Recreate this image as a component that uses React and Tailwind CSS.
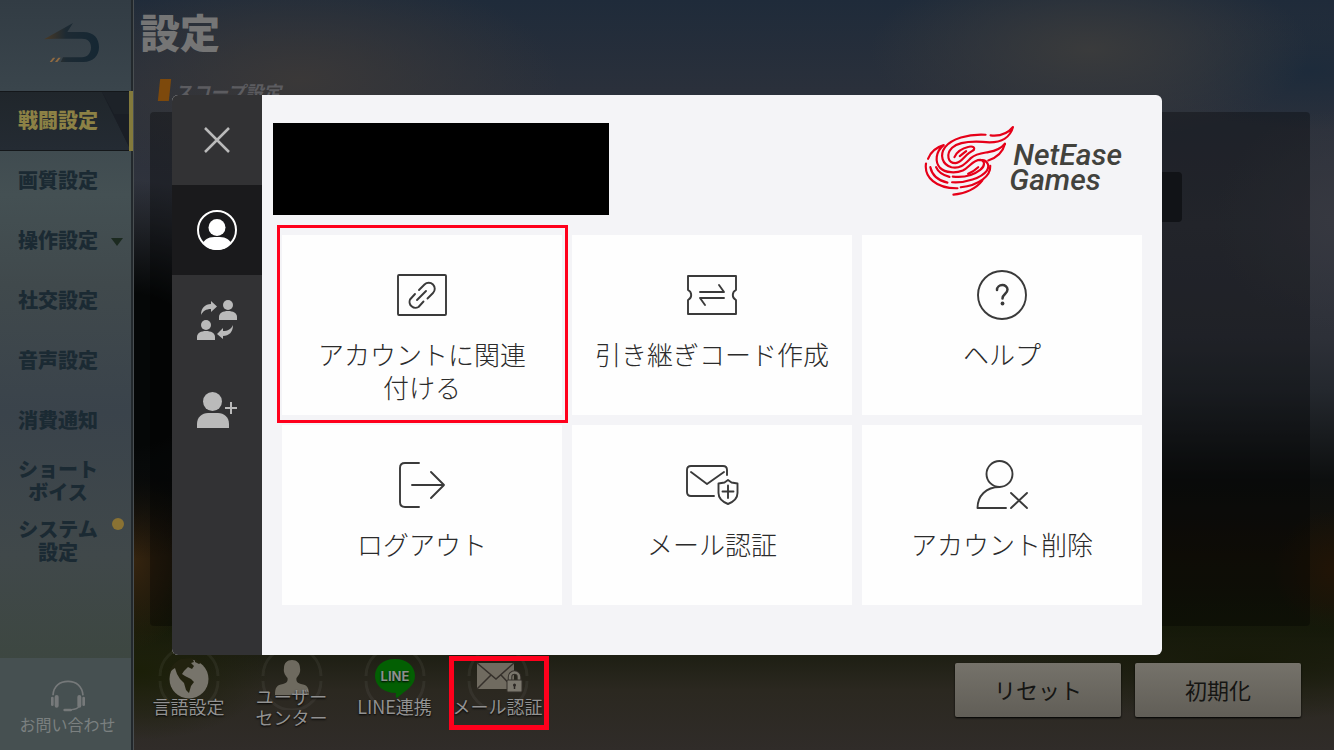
import React from 'react';

const tabs = [
  { lines: ['戦闘設定'], active: true },
  { lines: ['画質設定'] },
  { lines: ['操作設定'], expandable: true },
  { lines: ['社交設定'] },
  { lines: ['音声設定'] },
  { lines: ['消費通知'] },
  { lines: ['ショート', 'ボイス'] },
  { lines: ['システム', '設定'], badge: true },
];

function BackIcon() {
  return (
    <svg className="w-14 h-10" viewBox="0 0 168 120" fill="none">
      <defs>
        <linearGradient id="back" x1="0" x2="1">
          <stop offset="0" stopColor="#4a3a26" />
          <stop offset="0.4" stopColor="#1d2a33" />
          <stop offset="1" stopColor="#152733" />
        </linearGradient>
      </defs>
      <path d="M0 49 L87 0 L70 27 H118 C150 27 165 46 165 73 C165 98 148 117 118 117 H50 L57 103 H114 C130 103 141 91 141 73 C141 56 131 47 114 47 H30 Z" fill="url(#back)" />
      <path d="M17 117 L27 104 H34 L24 117 Z M33 117 L43 104 H50 L40 117 Z" fill="#8f6a42" />
    </svg>
  );
}

function HeadsetIcon() {
  return (
    <svg className="w-9 h-8" viewBox="0 0 108 96" fill="none" stroke="#76797a">
      <path d="M9 46 C10 18 30 4 54 4 C78 4 97 18 99 46" strokeWidth="5" />
      <path d="M7 54 V74 M101 54 V74" strokeWidth="8" strokeLinecap="round" />
      <path d="M20 51 V77 M88 51 V77" strokeWidth="12" strokeLinecap="round" />
      <path d="M86 80 C82 88 74 88 62 89" strokeWidth="4" />
      <path d="M44 90 H62" strokeWidth="8" strokeLinecap="round" />
    </svg>
  );
}

function Ring() {
  return (
    <g fill="none" stroke="#fff" strokeOpacity="0.05" strokeWidth="3">
      <path d="M3 30 A29 29 0 0 1 61 30" />
      <path d="M3 35 A29 29 0 0 0 61 35" />
    </g>
  );
}

function GlobeIcon() {
  return (
    <svg className="w-16 h-16" viewBox="0 0 64 64">
      <Ring />
      <circle cx="32" cy="33" r="19.500" fill="#77746b" />
      <path d="M12 26 C15 19 19 15 24 13 L35 12 L37 16 L34 17 L37 20 L35 23 L31 21 L27 25 L25 28 L28 30 L34 33 L37 36 L34 40 L32 47 L29 44 L27 37 L23 33 L20 28 L18 22 Z" fill="#22220f" />
      <path d="M38 13 L45 16 L42 18 L38 16 Z" fill="#22220f" />
    </svg>
  );
}

function UserIcon() {
  return (
    <svg className="w-16 h-16" viewBox="0 0 64 64">
      <Ring />
      <path d="M32 14 C37 14 40 17 40 22 C41 27 38 30 36.500 32 C36 35 37 37 41 38 C47 39 49 41 49 49 H15 C15 41 17 39 23 38 C27 37 28 35 27.500 32 C26 30 23 27 24 22 C24 17 27 14 32 14 Z" fill="#6e6a5f" />
    </svg>
  );
}

function LineIcon() {
  return (
    <svg className="w-16 h-16" viewBox="0 0 64 64">
      <Ring />
      <path d="M32 13 C44 13 52 20 52 30 C52 40 43 44 34 52 C32 51 33 49 33 47 C20 47 12 39 12 30 C12 20 20 13 32 13 Z" fill="#035f03" />
      <text x="32" y="35" textAnchor="middle" fontSize="13" fontWeight="700" fontFamily="Inter, sans-serif" fill="#8b918b">LINE</text>
    </svg>
  );
}

function MailLockIcon() {
  return (
    <svg className="w-16 h-16" viewBox="0 0 64 64">
      <Ring />
      <rect x="11" y="17" width="37" height="26" fill="#706b60" />
      <path d="M11 17 L30 33 L48 17 M11 43 L25 29 M48 43 L35 29" fill="none" stroke="#35302b" strokeWidth="1.500" />
      <path d="M44 36 V31 A4.500 4.500 0 0 1 53 31 V36" fill="none" stroke="#35302b" strokeWidth="4.500" />
      <path d="M44 36 V31 A4.500 4.500 0 0 1 53 31 V36" fill="none" stroke="#7b776d" strokeWidth="2.500" />
      <rect x="41" y="34" width="15" height="12" rx="1" fill="#7b776d" stroke="#35302b" />
      <circle cx="48.500" cy="39" r="1.500" fill="#2c2824" />
      <path d="M48.500 39 V43" stroke="#2c2824" strokeWidth="1.500" />
    </svg>
  );
}

const shortcuts = [
  { lines: ['言語設定'], Icon: GlobeIcon },
  { lines: ['ユーザー', 'センター'], Icon: UserIcon },
  { lines: ['LINE連携'], Icon: LineIcon },
  { lines: ['メール認証'], Icon: MailLockIcon, marked: true },
];

function LinkIcon() {
  return (
    <>
      <rect x="1" y="5" width="48" height="40" rx="1" />
      <path d="M23 20 L28.500 14.500 A6 6 0 0 1 37 23 L31.500 28.500" transform="translate(-1)" />
      <path d="M19 24 L14 29.500 A6 6 0 0 0 22.500 37 L27.500 31.500" transform="translate(-1)" />
      <path d="M20 30 L29 21" />
    </>
  );
}

function TicketIcon() {
  return (
    <>
      <path d="M1 6 H49 V20 A5.500 5.500 0 0 0 49 30 V44 H1 V30 A5.500 5.500 0 0 0 1 20 Z" />
      <path d="M13 22 H37 L32 15 M37 28 H13 L18 35" />
    </>
  );
}

function HelpIcon() {
  return (
    <>
      <circle cx="25" cy="25" r="24" />
      <path d="M20 20 C20 13.500 30.500 13.500 30.500 19.500 C30.500 24 25.500 24 25.500 28.500" strokeWidth="2.500" />
      <circle cx="25.500" cy="33.500" r="1.900" fill="currentColor" stroke="none" />
    </>
  );
}

function LogoutIcon() {
  return (
    <>
      <path d="M22 3 H8 Q3 3 3 8 V42 Q3 47 8 47 H22" />
      <path d="M15 25 H47 M34 12 L47 25 L34 38" />
    </>
  );
}

function MailShieldIcon() {
  return (
    <>
      <path d="M27 36 H4 Q0 36 0 32 V10 Q0 6 4 6 H36 Q40 6 40 10 V15" />
      <path d="M4 12 L20 24 L37 12" />
      <path d="M41 20 L44.500 22.500 L50.500 23.500 V33 C50.500 38 46 42 41 44 C36 42 31.500 38 31.500 33 V23.500 L37.500 22.500 Z" />
      <path d="M41 25.500 V38 M35.500 31.500 H46.500" />
    </>
  );
}

function DeleteUserIcon() {
  return (
    <>
      <circle cx="22.500" cy="14" r="13" />
      <path d="M22.500 27 C9 27 0.500 36 0.500 48 H29" />
      <path d="M34 33 L50 48 M50 33 L34 48" />
    </>
  );
}

const actions = [
  { lines: ['アカウントに関連', '付ける'], Icon: LinkIcon, marked: true },
  { lines: ['引き継ぎコード作成'], Icon: TicketIcon },
  { lines: ['ヘルプ'], Icon: HelpIcon },
  { lines: ['ログアウト'], Icon: LogoutIcon },
  { lines: ['メール認証'], Icon: MailShieldIcon },
  { lines: ['アカウント削除'], Icon: DeleteUserIcon },
];

function Logo() {
  return (
    <div className="flex items-center">
      <svg className="w-[91px] h-[72px] -mr-1.5" viewBox="40 32 272 215" fill="none" stroke="#e60019" strokeWidth="6.500" strokeLinecap="round" strokeLinejoin="round">
        {/* upper flame and the swirl it runs into */}
        <path d="M224 61 C170 58 122 74 103 98 C86 122 94 150 122 158 C150 164 164 146 180 131 C196 117 214 116 232 113 C254 109 272 101 282 88" />
        <path d="M239 63 C268 66 290 58 306 38 C298 68 272 84 236 84 C196 80 148 78 124 100 C104 120 112 146 134 146 C152 144 160 126 174 116 L188 107" />
        <path d="M188 107 C194 99 186 94 174 97 C156 101 138 112 131 128" />
        <path d="M147 125 L166 110" />
        {/* lower flame */}
        <path d="M282 88 C276 112 256 130 232 138" />
        {/* left flame and lower swirl */}
        <path d="M52 133 C60 112 78 98 99 92 C74 112 72 142 88 160 C104 176 136 176 156 168 C176 158 186 136 208 136 C224 138 222 156 208 166 C190 180 160 190 126 186" />
        <path d="M46 147 C40 188 76 222 140 221" />
        <path d="M59 158 C64 182 84 198 110 204" />
        <path d="M76 158 C82 172 96 182 116 187" />
        <path d="M124 203 C164 206 212 190 228 168 C238 152 228 138 214 137" />
        <path d="M172 178 C182 174 192 167 202 158" />
        <path d="M238 154 C240 184 204 212 150 218" />
        <path d="M214 198 C196 222 162 238 128 240" />
      </svg>
      <div className="pt-[11px] font-['Roboto',sans-serif] italic font-medium text-[30px] leading-[25px] text-[#42423d]">
        <div className="pl-1">NetEase</div>
        <div>Games</div>
      </div>
    </div>
  );
}

const navButton = 'h-[90px] flex items-center justify-center text-[#bababa]';

function AccountModal() {
  return (
    <div className="fixed inset-0 flex items-center justify-center px-4">
      <div role="dialog" aria-label="アカウント" className="w-full max-w-[990px] flex rounded-md overflow-hidden bg-[#f4f4f7]">
        <nav className="w-[90px] shrink-0 flex flex-col bg-[#323234]">
          <button aria-label="閉じる" className={navButton}>
            <svg className="w-10 h-10" viewBox="0 0 40 40" stroke="currentColor" strokeWidth="2.500">
              <path d="M8 8 L32 32 M32 8 L8 32" />
            </svg>
          </button>
          <button aria-label="アカウント" className="h-[90px] flex items-center justify-center text-white bg-[#1a1a1c]">
            <svg className="w-10 h-10" viewBox="0 0 40 40" fill="currentColor">
              <circle cx="20" cy="20" r="19" fill="none" stroke="currentColor" strokeWidth="2" />
              <circle cx="20" cy="17.500" r="8.500" />
              <path d="M6 33 C9 28 12 27 20 27 C28 27 31 28 34 33 C30 38 25 40 20 40 C15 40 10 38 6 33 Z" />
            </svg>
          </button>
          <button aria-label="アカウント切替" className={navButton}>
            <svg className="w-10 h-10" viewBox="0 0 40 40" fill="currentColor">
              <circle cx="31" cy="5" r="5" />
              <path d="M22 20 V17 C22 13 26 11 31 11 C36 11 40 13 40 17 V20 Z" />
              <circle cx="9" cy="25" r="5" />
              <path d="M0 40 V37 C0 33 4 31 9 31 C14 31 18 33 18 37 V40 Z" />
              <path d="M4 15 C4 8 8 4 14 4 V1 L20 6.500 L14 12 V9 C9 9 6 11 4 15 Z" />
              <path d="M36 25 C36 32 32 36 26 36 V39 L20 34 L26 28 V31 C31 31 34 29 36 25 Z" />
            </svg>
          </button>
          <button aria-label="アカウント追加" className={navButton}>
            <svg className="w-10 h-10" viewBox="0 0 40 40" fill="currentColor">
              <circle cx="15.500" cy="11.500" r="9.500" />
              <path d="M0 38 V34 C0 27 5 23 11 23 H21 C27 23 32 27 32 34 V38 Z" />
              <path d="M28 18 H40 M34 12 V24" stroke="currentColor" strokeWidth="2" />
            </svg>
          </button>
        </nav>
        <div className="flex-1 min-w-0">
          <header className="h-[140px] flex items-start justify-between pt-7 pl-[11px] pr-10">
            <div className="w-[336px] h-[92px] bg-black" />
            <div className="pt-0.5"><Logo /></div>
          </header>
          <div className="grid grid-cols-3 gap-[10px] px-5 pb-[50px]">
            {actions.map(({ lines, Icon, marked }) => (
              <button key={lines[0]} className="relative h-[180px] flex flex-col items-center pt-[35px] bg-[#fefefe] text-[#2b2b2b]">
                <svg className="w-[50px] h-[50px] overflow-visible text-[#3a3a3a]" viewBox="0 0 50 50" fill="none" stroke="currentColor" strokeWidth="1.900" strokeLinecap="round" strokeLinejoin="round">
                  <Icon />
                </svg>
                <span className="mt-[17px] text-[26px] leading-[33px] font-light">
                  {lines.map((line) => <span key={line} className="block whitespace-nowrap">{line}</span>)}
                </span>
                {marked && <span className="absolute -left-[5px] -right-[6px] -top-[10px] -bottom-2 border-[3px] border-[#ff001c]" />}
              </button>
            ))}
          </div>
        </div>
      </div>
    </div>
  );
}

function Sidebar() {
  return (
    <aside className="w-[133px] shrink-0 flex flex-col border-r-2 border-[#22282c] bg-[linear-gradient(180deg,#323c44_0%,#3a454c_12%,#445053_26%,#40494c_38%,#3a434b_55%,#40484a_74%,#3d4741_88%)]">
      <button aria-label="戻る" className="h-[91px] flex items-center justify-center pl-3 pb-1.5">
        <BackIcon />
      </button>
      <nav className="flex flex-col">
        {tabs.map(({ lines, active, expandable, badge }) => (
          <button
            key={lines[0]}
            className={`relative h-[60px] flex flex-col justify-center pr-[15px] pb-[3px] text-xl leading-[23px] font-black ${active ? 'text-[#8c8145] border-y border-[#14171a] bg-[linear-gradient(180deg,#20262b,#242b33)]' : 'text-[#1b2a33]'}`}
          >
            {active && (
              <svg className="absolute inset-0 w-full h-full" viewBox="0 0 131 58" preserveAspectRatio="none">
                <path d="M102 0 H131 V58 Z" fill="#1d2228" />
                <path d="M102 0 L129 55 V22 H114 Z" fill="#1a1e25" />
              </svg>
            )}
            {lines.map((line) => <span key={line} className="relative block w-full text-center">{line}</span>)}
            {active && <span className="absolute -right-0.5 -top-px -bottom-px w-1 bg-[#837a3c]" />}
            {expandable && (
              <svg className="absolute right-2 top-[27px] w-3 h-2" viewBox="0 0 12 8"><path d="M0 0 H12 L6 8 Z" fill="#1c2a20" /></svg>
            )}
            {badge && <span className="absolute right-[7px] top-[7px] w-3 h-3 rounded-full bg-[#8a7233]" />}
          </button>
        ))}
      </nav>
      <button className="mt-auto h-[92px] flex flex-col items-center justify-end pb-[14px] pl-1 bg-[#465051] text-base leading-6 text-[#7b8080]">
        <HeadsetIcon />
        お問い合わせ
      </button>
    </aside>
  );
}

function Background() {
  return (
    <div className="absolute inset-0 bg-[linear-gradient(180deg,#1f2b3a_0%,#2a303b_12%,#31343d_30%,#2d3038_45%,#24282e_52%,#0d0f0f_64%,#15120a_74%,#14180a_84%,#2b2820_92%,#302c29_100%)]">
      <div className="absolute inset-0 bg-[radial-gradient(ellipse_180px_190px_at_133px_370px,#050707_40%,transparent),radial-gradient(ellipse_220px_90px_at_1090px_50px,#3a3b3c,transparent),radial-gradient(ellipse_260px_110px_at_300px_80px,#3a3838,transparent),radial-gradient(ellipse_160px_60px_at_1310px_70px,#1d2b3b,transparent),radial-gradient(ellipse_120px_110px_at_1334px_220px,#363840,transparent),radial-gradient(ellipse_60px_90px_at_133px_560px,#35240f,transparent),radial-gradient(ellipse_130px_70px_at_140px_670px,#1b1f08,transparent),radial-gradient(ellipse_260px_60px_at_1240px_660px,#171a09,transparent),radial-gradient(ellipse_60px_60px_at_1334px_570px,#211406,transparent)]" />
    </div>
  );
}

function Settings() {
  return (
    <main className="relative flex-1 min-w-0 flex flex-col border-l border-[#4a4f52]">
      <h1 className="h-[66px] pl-1.5 text-[40px] leading-[62px] font-black text-[#757575]">設定</h1>
      <div className="h-[46px] flex items-start pt-[13px] pl-[25px]">
        <span className="w-[11px] h-[22px] bg-[#7d490c] -skew-x-6" />
        <h2 className="pl-1 text-lg leading-6 italic font-bold text-[#5c5c60]">スコープ設定</h2>
      </div>
      <div className="flex-1 flex justify-end ml-4 mr-6 rounded-sm bg-black/30">
        <div className="mt-[60px] mr-32 w-1/2 h-[50px] rounded-sm bg-[#111317]" />
      </div>
      <footer className="h-[124px] flex items-start justify-between pl-[3px] pr-[33px]">
        <div className="flex pt-5">
          {shortcuts.map(({ lines, Icon, marked }) => (
            <button key={lines[0]} className="relative w-[103px] h-[88px] flex flex-col items-center text-lg leading-[21px] text-[#929292] text-shadow-[0_1px_2px_#000]">
              <Icon />
              <span className={lines.length > 1 ? '-mt-6 whitespace-nowrap' : '-mt-3.5 whitespace-nowrap'}>
                {lines.map((line) => <span key={line} className="block">{line}</span>)}
              </span>
              {marked && <span className="absolute left-[3px] right-0 top-2.5 h-[74px] border-[5px] border-[#ff001c]" />}
            </button>
          ))}
        </div>
        <div className="flex gap-3.5 pt-[37px]">
          {['リセット', '初期化'].map((label) => (
            <button key={label} className="w-[166px] h-[54px] pb-0.5 rounded-xs text-[22px] text-[#151513] shadow-[0_1px_2px_#000] bg-[linear-gradient(180deg,#75726a,#615e57)]">
              {label}
            </button>
          ))}
        </div>
      </footer>
    </main>
  );
}

export default function App() {
  return (
    <div className="relative min-h-screen flex font-['Noto_Sans_CJK_JP',sans-serif]">
      <Background />
      <div className="relative flex flex-1 min-w-0">
        <Sidebar />
        <Settings />
      </div>
      <AccountModal />
    </div>
  );
}
